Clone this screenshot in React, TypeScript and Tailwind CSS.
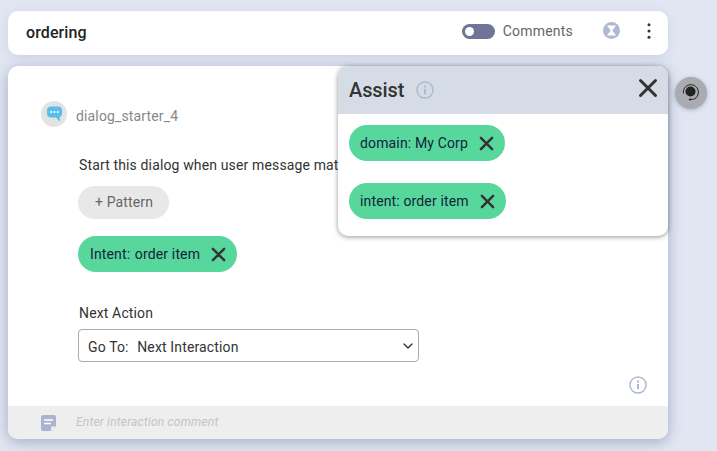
import React from 'react';
import { ChevronDown } from 'lucide-react';

const font = { fontFamily: 'Roboto, sans-serif' };

const CloseIcon = ({ size, width = 2.6 }: { size: number; width?: number }) => (
  <svg width={size} height={size} viewBox="0 0 16 16" fill="none" stroke="#333333" strokeWidth={width} strokeLinecap="round">
    <path d="M2 2l12 12M14 2L2 14" />
  </svg>
);

const InfoIcon = ({ size }: { size: number }) => (
  <svg width={size} height={size} viewBox="0 0 18 18" fill="none" stroke="#b0b9d2">
    <circle cx="9" cy="9" r="8" strokeWidth="1.5" />
    <path d="M9 8v5.2" strokeWidth="2" />
    <path d="M9 4.4v2" strokeWidth="2" />
  </svg>
);

const Pill = ({ label, className }: { label: React.ReactNode; className: string }) => (
  <div className={`flex h-9 items-center rounded-[18px] bg-[#57d79c] pl-[11px] text-sm tracking-[0.14px] text-[#14233c] ${className}`}>
    <span className="whitespace-pre">{label}</span>
    <span className="ml-auto flex pr-[11px]">
      <CloseIcon size={15} />
    </span>
  </div>
);

export default function App() {
  return (
    <div className="flex h-[451px] w-[717px] overflow-hidden bg-[#e1e6f2] pl-2 pt-[11px]" style={font}>
      <div className="flex w-[660px] flex-col gap-[11px]">
        <header className="flex h-11 items-center rounded-[10px] bg-white pl-[18px] pr-[17px] shadow-[0_2px_8px_rgba(150,160,190,0.25)]">
          <h1 className="text-base font-medium tracking-[0.1px] text-[#222222]">ordering</h1>
          <div className="mb-1 ml-auto flex items-center">
            <div className="flex h-[15px] w-[33px] items-center rounded-full bg-[#6f7596] pl-[3px]">
              <span className="h-[9px] w-[9px] rounded-full bg-white" />
            </div>
            <span className="ml-2 text-sm tracking-[0.2px] text-[#666666]">Comments</span>
            <svg className="mb-[2px] ml-[30px]" width="17" height="17" viewBox="0 0 17 17">
              <circle cx="8.5" cy="8.5" r="8.5" fill="#b0b9d2" />
              <path d="M4 3.500h9L9.300 8.500l3.700 5H4l3.700-5z" fill="#ffffff" />
            </svg>
            <svg className="ml-[27px]" width="4" height="16" viewBox="0 0 4 16" fill="#333333">
              <circle cx="2" cy="1.700" r="1.500" />
              <circle cx="2" cy="8" r="1.500" />
              <circle cx="2" cy="14.300" r="1.500" />
            </svg>
          </div>
        </header>

        <main className="relative flex h-[373px] flex-col rounded-[10px] bg-white shadow-[0_3px_14px_rgba(90,105,145,0.45)]">
          <div className="flex-1 pl-[33px] pt-[35px]">
            <div className="flex items-start gap-[9px]">
              <div className="flex h-[26px] w-[26px] items-center justify-center rounded-full bg-[#e3e3e3]">
                <svg width="15" height="16" viewBox="0 0 15 16">
                  <path d="M4 0.500h7A3.800 3.800 0 0 1 15 4.500v3A3.800 3.800 0 0 1 12.800 11V15.500L9 11.500H4A3.800 3.800 0 0 1 0 7.500v-3A3.800 3.800 0 0 1 4 0.500z" fill="#5bbcee" />
                  <circle cx="4.200" cy="6" r="1.100" fill="#ffffff" />
                  <circle cx="7.500" cy="6" r="1.100" fill="#ffffff" />
                  <circle cx="10.800" cy="6" r="1.100" fill="#ffffff" />
                </svg>
              </div>
              <span className="mt-[5px] text-sm leading-5 tracking-[0.14px] text-[#888888]">dialog_starter_4</span>
            </div>

            <div className="ml-[37px] mt-[23px] flex flex-col items-start">
              <p className="ml-px whitespace-nowrap text-sm leading-[30px] tracking-[0.14px] text-[#333333]">Start this dialog when user message matches</p>
              <button className="mt-[6px] h-[33px] w-[91px] rounded-full bg-[#e8e8e8] pb-[2px] pl-px text-sm tracking-[0.14px] text-[#666666]">+ Pattern</button>
              <Pill
                label={
                  <>
                    <span className="ml-px">Intent:</span> <span className="ml-px">order item</span>
                  </>
                }
                className="mt-[17px] w-[159px]"
              />
              <label className="ml-px mt-[33px] text-sm leading-4 tracking-[0.14px] text-[#333333]">Next Action</label>
              <div className="mt-2 flex h-[33px] w-[341px] items-center rounded border border-[#aaaaaa] pl-[9px] pr-[2px] pt-[2px] text-sm tracking-[0.14px] text-[#333333]">
                <span className="whitespace-pre">
                  Go To: <span className="ml-[5px]">Next Interaction</span>
                </span>
                <ChevronDown className="-mt-[2px] ml-auto" size={16} strokeWidth={2} />
              </div>
            </div>
          </div>

          <div className="flex justify-end pb-3 pr-[21px]">
            <InfoIcon size={18} />
          </div>

          <footer className="flex h-[33px] items-center gap-5 rounded-b-[10px] bg-[#eeeeee] pl-[33px]">
            <svg width="15" height="16" viewBox="0 0 15 16">
              <path d="M2 0h11a2 2 0 0 1 2 2v9.500L10 16H2a2 2 0 0 1-2-2V2a2 2 0 0 1 2-2z" fill="#aab4d0" />
              <path d="M3 5h9M3 8.500h7" stroke="#ffffff" strokeWidth="1.500" />
              <path d="M10 16v-3.500a1 1 0 0 1 1-1h4z" fill="#eeeeee" />
            </svg>
            <span className="-mt-px text-xs italic tracking-[0.2px] text-[#c4c4c4]">Enter interaction comment</span>
          </footer>

          <aside className="absolute right-0 top-0 h-[170px] w-[330px] overflow-hidden rounded-[10px] bg-white shadow-[0_1px_5px_rgba(60,60,60,0.55)]">
            <div className="flex h-12 items-center bg-[#d5dce6] pl-[11px] pr-[10px]">
              <span className="text-xl font-medium tracking-[-0.1px] text-[#333333]">Assist</span>
              <span className="ml-[12px] flex">
                <InfoIcon size={18} />
              </span>
              <span className="ml-auto mb-1 flex">
                <CloseIcon size={20} width={2.4} />
              </span>
            </div>
            <div className="flex flex-col items-start gap-[22px] pl-[11px] pt-[11px]">
              <Pill label="domain: My Corp" className="w-[156px]" />
              <Pill label="intent: order item" className="w-[157px]" />
            </div>
          </aside>

          <button className="absolute left-[667px] top-[11px] flex h-[32px] w-[32px] items-center justify-center rounded-full bg-[#a9abb0] shadow-[0_1px_4px_rgba(90,105,145,0.4)]">
            <svg width="20" height="20" viewBox="0 0 20 20" fill="none">
              <circle cx="9.500" cy="8.500" r="5" fill="#222222" />
              <path d="M2.500 10.500A7.500 7.500 0 1 1 16 13.500C15 15.500 13 16.500 9 16.500" stroke="#222222" strokeWidth="1" />
              <circle cx="9" cy="16.500" r="1" fill="#222222" />
            </svg>
          </button>
        </main>
      </div>
    </div>
  );
}
